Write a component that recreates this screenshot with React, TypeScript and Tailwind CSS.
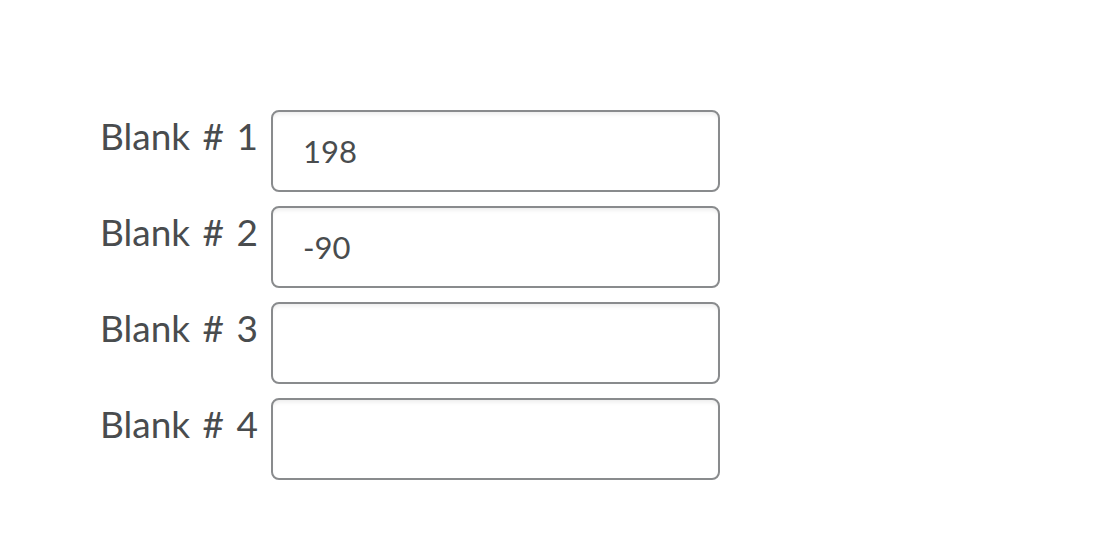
import React from "react";

const rows = [
  { label: "Blank # 1", value: "198" },
  { label: "Blank # 2", value: "-90" },
  { label: "Blank # 3", value: "" },
  { label: "Blank # 4", value: "" },
];

export default function App() {
  return (
    <div className="w-[1096px] h-[554px] bg-white pt-[110px] pl-[100px]" style={{ fontFamily: "Lato, 'Noto Sans', sans-serif" }}>
      <div className="flex flex-col gap-[14px]">
        {rows.map((r) => (
          <div key={r.label} className="flex items-start">
            <div className="w-[171px] pt-[4px] text-[37px] leading-[44px] text-[#494c4e] whitespace-nowrap [word-spacing:3px]">{r.label}</div>
            <div className="w-[449px] h-[82px] rounded-[8px] border-2 border-[#898b8d] bg-white shadow-[inset_0_4px_4px_-2px_rgba(0,0,0,0.08)] pl-[30px] pt-[21px] text-[31px] leading-[36px] text-[#494c4e]">
              {r.value}
            </div>
          </div>
        ))}
      </div>
    </div>
  );
}
